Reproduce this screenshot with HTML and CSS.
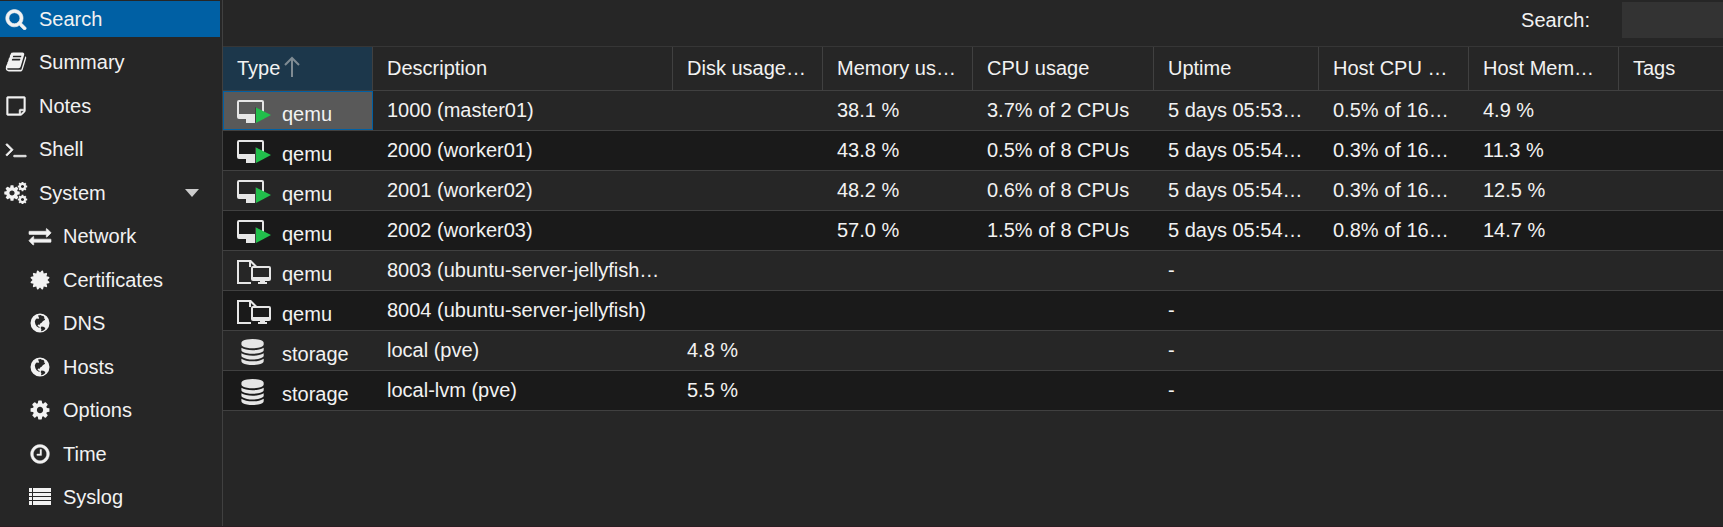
FILE: index.html
```html
<!DOCTYPE html>
<html lang="en">
<head>
    <meta charset="UTF-8">
    <meta name="viewport" content="width=device-width, initial-scale=1.0">
    <title>pve - Search</title>
    <link rel="stylesheet" href="styles.css">
</head>
<body>
    <!-- Shared icons -->
    <svg class="sprite" aria-hidden="true">
        <symbol id="i-search" viewBox="0 0 1792 1792"><path stroke="currentColor" stroke-width="50" d="M1216 832q0-185-131.5-316.5t-316.5-131.5-316.5 131.5-131.5 316.5 131.5 316.5 316.5 131.5 316.5-131.5 131.5-316.5zm512 832q0 52-38 90t-90 38q-54 0-90-38l-343-342q-179 124-399 124-143 0-273.5-55.5t-225-150-150-225-55.5-273.5 55.5-273.5 150-225 225-150 273.5-55.5 273.5 55.5 225 150 150 225 55.5 273.5q0 220-124 399l343 343q37 37 37 90z"/></symbol>
        <symbol id="i-book" viewBox="0 0 1792 1792"><path d="M1703 478q40 57 18 129l-275 906q-19 64-76.5 107.5t-122.5 43.5h-923q-77 0-148.5-53.5t-99.5-131.5q-24-67-2-127 0-4 3-27t4-37q1-8-3-21.5t-3-19.5q2-11 8-21t16.5-23.5 16.5-23.5q23-38 45-91.5t30-91.5q3-10 .5-30t-.5-28q3-11 17-28t17-23q21-36 42-92t25-90q1-9-2.5-32t.5-28q4-13 22-30.5t22-22.5q19-26 42.5-84.5t27.5-96.5q1-8-3-25.5t-2-26.5q2-8 9-18t18-23 17-21q8-12 16.5-30.5t15-35 16-36 19.5-32 26.5-23.5 36-11.5 47.5 5.5l-1 3q38-9 51-9h761q74 0 114 56t18 130l-274 906q-36 119-71.5 153.5t-128.5 34.5h-869q-27 0-38 15-11 16-1 43 24 70 144 70h923q29 0 56-15.5t35-41.5l300-987q7-22 5-57 38 15 59 43zm-1064 2q-4 13 2 22.5t20 9.5h608q13 0 25.5-9.5t16.5-22.5l21-64q4-13-2-22.5t-20-9.5h-608q-13 0-25.5 9.5t-16.5 22.5zm-83 256q-4 13 2 22.5t20 9.5h608q13 0 25.5-9.5t16.5-22.5l21-64q4-13-2-22.5t-20-9.5h-608q-13 0-25.5 9.5t-16.5 22.5z"/></symbol>
        <symbol id="i-note" viewBox="-128 0 1792 1792"><path stroke="currentColor" stroke-width="40" d="M1400 1280h-248v248q29-10 41-22l185-185q12-12 22-41zm-280-128h288v-896h-1280v1280h896v-288q0-40 28-68t68-28zm416-928v1024q0 40-20 88t-48 76l-184 184q-28 28-76 48t-88 20h-1024q-40 0-68-28t-28-68v-1344q0-40 28-68t68-28h1344q40 0 68 28t28 68z"/></symbol>
        <symbol id="i-terminal" viewBox="0 0 1792 1792"><path stroke="currentColor" stroke-width="60" d="M649 983l-466 466q-10 10-23 10t-23-10l-50-50q-10-10-10-23t10-23l393-393-393-393q-10-10-10-23t10-23l50-50q10-10 23-10t23 10l466 466q10 10 10 23t-10 23zm1079 457v64q0 14-9 23t-23 9h-960q-14 0-23-9t-9-23v-64q0-14 9-23t23-9h960q14 0 23 9t9 23z"/></symbol>
        <symbol id="i-cog" viewBox="0 0 1792 1792"><path d="M1152 896q0-106-75-181t-181-75-181 75-75 181 75 181 181 75 181-75 75-181zm512-109v222q0 12-8 23t-20 13l-185 28q-19 54-39 91 35 50 107 138 10 12 10 25t-9 23q-27 37-99 108t-94 71q-12 0-26-9l-138-108q-44 23-91 38-16 136-29 186-7 28-36 28h-222q-14 0-24.5-8.5t-11.5-21.5l-28-184q-49-16-90-37l-141 107q-10 9-25 9-14 0-25-11-126-114-165-168-7-10-7-23 0-12 8-23 15-21 51-66.5t54-70.5q-27-50-41-99l-183-27q-13-2-21-12.5t-8-23.5v-222q0-12 8-23t19-13l186-28q14-46 39-92-40-57-107-138-10-12-10-24 0-10 9-23 26-36 98.5-107.5t94.5-71.5q13 0 26 10l138 107q44-23 91-38 16-136 29-186 7-28 36-28h222q14 0 24.5 8.5t11.5 21.5l28 184q49 16 90 37l142-107q9-9 24-9 13 0 25 10 129 119 165 170 7 8 7 22 0 12-8 23-15 21-51 66.5t-54 70.5q26 50 41 98l183 28q13 2 21 12.5t8 23.5z"/></symbol>
        <symbol id="i-cogs" viewBox="0 0 24 22">
            <use href="#i-cog" x="-1" y="2" width="18" height="18"/>
            <use href="#i-cog" x="13" y="-1" width="11" height="11"/>
            <use href="#i-cog" x="13" y="12" width="11" height="11"/>
        </symbol>
        <symbol id="i-exchange" viewBox="0 0 1792 1792"><path stroke="currentColor" stroke-width="50" d="M1792 1184v192q0 13-9.5 22.5t-22.5 9.5h-1376v192q0 13-9.5 22.5t-22.5 9.5q-12 0-24-10l-319-320q-9-9-9-22 0-14 9-23l320-320q9-9 23-9 13 0 22.5 9.5t9.5 22.5v192h1376q13 0 22.5 9.5t9.5 22.5zm0-544q0 14-9 23l-320 320q-9 9-23 9-13 0-22.5-9.5t-9.5-22.5v-192h-1376q-13 0-22.5-9.5t-9.5-22.5v-192q0-13 9.5-22.5t22.5-9.5h1376v-192q0-14 9-23t23-9q12 0 24 10l319 319q9 9 9 23z"/></symbol>
        <symbol id="i-cert" viewBox="0 0 1792 1792"><path d="M1504 896l138 135q30 28 20 70-12 41-52 51l-188 48 53 186q12 41-19 70-29 31-70 19l-186-53-48 188q-10 40-51 52-12 2-19 2-31 0-51-22l-135-138-135 138q-28 30-70 20-41-11-51-52l-48-188-186 53q-41 12-70-19-31-29-19-70l53-186-188-48q-40-10-52-51-10-42 20-70l138-135-138-135q-30-28-20-70 12-41 52-51l188-48-53-186q-12-41 19-70 29-31 70-19l186 53 48-188q10-41 51-51 41-12 70 19l135 139 135-139q29-30 70-19 41 10 51 51l48 188 186-53q41-12 70 19 31 29 19 70l-53 186 188 48q40 10 52 51 10 42-20 70z"/></symbol>
        <symbol id="i-globe" viewBox="0 0 22 22">
            <path fill-rule="evenodd" d="M11 1.500a9.500 9.500 0 1 0 0 19a9.500 9.500 0 0 0 0-19z M9 3.600l2.600-.6 1.200.8 1.600.2 1 1.200-.6 1.200 1.400.4-.4 1.200-1.800 1-1.400 1.800-1.400.8-.4 1.200-1.200-.2-1 .6.400 1 1.200.6.6 1.200-1.400-.4-1.800-1.400-1.200-2-.6-2.600.8-2 1.400-1.400 1 .8 1.200-.8z M12.400 14.400l2 .4 2 1.200-.6 1.400-1.800 1.400-2 .4.400-2-.8-1.200z"/>
        </symbol>
        <symbol id="i-clock" viewBox="0 0 1792 1792"><path stroke="currentColor" stroke-width="30" d="M1024 544v448q0 14-9 23t-23 9h-320q-14 0-23-9t-9-23v-64q0-14 9-23t23-9h224v-352q0-14 9-23t23-9h64q14 0 23 9t9 23zm416 352q0-148-73-273t-198-198-273-73-273 73-198 198-73 273 73 273 198 198 273 73 273-73 198-198 73-273zm224 0q0 209-103 385.5t-279.5 279.5-385.5 103-385.5-103-279.5-279.5-103-385.5 103-385.5 279.5-279.5 385.5-103 385.5 103 279.5 279.5 103 385.5z"/></symbol>
        <symbol id="i-list" viewBox="0 0 22 22"><path d="M0 2h3v4H0zM4 2h18v4H4zM0 7h3v3H0zM4 7h18v3H4zM0 11h3v3H0zM4 11h18v3H4zM0 15h3v4H0zM4 15h18v4H4z"/></symbol>
        <symbol id="i-vm" viewBox="0 0 34 26">
            <path fill-rule="evenodd" d="M2 1h23a2 2 0 0 1 2 2v15a2 2 0 0 1-2 2h-7v4H9v-4H2a2 2 0 0 1-2-2V3a2 2 0 0 1 2-2zM2 3v12h23V3z"/>
            <path class="shadow" d="M18 8v16l3-2V10z"/>
            <path class="play" d="M19 8.500l15 7.500-15 8z"/>
        </symbol>
        <symbol id="i-template" viewBox="0 0 34 26">
            <path d="M0 1h14l6 6h-3l-3-3v4h-2V3H2v20h12v2H0z"/>
            <path fill-rule="evenodd" d="M16 7h16a2 2 0 0 1 2 2v11a2 2 0 0 1-2 2h-4v1h2v2h-9v-2h2v-1h-7a2 2 0 0 1-2-2V9a2 2 0 0 1 2-2zM16 9v9h16V9z"/>
        </symbol>
        <symbol id="i-storage" viewBox="100 0 1792 1792"><path d="M896 768q237 0 443-43t325-127v170q0 69-103 128t-280 93.500-385 34.500-385-34.500-280-93.500-103-128v-170q119 84 325 127t443 43zm0 768q237 0 443-43t325-127v170q0 69-103 128t-280 93.500-385 34.500-385-34.500-280-93.500-103-128v-170q119 84 325 127t443 43zm0-384q237 0 443-43t325-127v170q0 69-103 128t-280 93.500-385 34.500-385-34.500-280-93.500-103-128v-170q119 84 325 127t443 43zm0-1152q208 0 385 34.500t280 93.500 103 128v128q0 69-103 128t-280 93.500-385 34.500-385-34.500-280-93.500-103-128v-128q0-69 103-128t280-93.500 385-34.500z"/></symbol>
    </svg>

    <div class="layout">
        <nav class="sidebar">
            <ul class="nav">
                <li><a href="#search" class="nav-link active"><svg class="icon"><use href="#i-search"/></svg>Search</a></li>
                <li><a href="#summary" class="nav-link"><svg class="icon"><use href="#i-book"/></svg>Summary</a></li>
                <li><a href="#notes" class="nav-link"><svg class="icon"><use href="#i-note"/></svg>Notes</a></li>
                <li><a href="#shell" class="nav-link"><svg class="icon"><use href="#i-terminal"/></svg>Shell</a></li>
                <li><a href="#system" class="nav-link"><svg class="icon"><use href="#i-cogs"/></svg>System<span class="caret"></span></a></li>
                <li><a href="#network" class="nav-link sub"><svg class="icon"><use href="#i-exchange"/></svg>Network</a></li>
                <li><a href="#certificates" class="nav-link sub"><svg class="icon"><use href="#i-cert"/></svg>Certificates</a></li>
                <li><a href="#dns" class="nav-link sub"><svg class="icon"><use href="#i-globe"/></svg>DNS</a></li>
                <li><a href="#hosts" class="nav-link sub"><svg class="icon"><use href="#i-globe"/></svg>Hosts</a></li>
                <li><a href="#options" class="nav-link sub"><svg class="icon"><use href="#i-cog"/></svg>Options</a></li>
                <li><a href="#time" class="nav-link sub"><svg class="icon"><use href="#i-clock"/></svg>Time</a></li>
                <li><a href="#syslog" class="nav-link sub"><svg class="icon"><use href="#i-list"/></svg>Syslog</a></li>
            </ul>
        </nav>

        <main class="content">
            <div class="toolbar">
                <label for="search">Search:</label>
                <input type="text" id="search" class="search-input">
            </div>

            <table class="grid">
                <colgroup>
                    <col class="col-type">
                    <col class="col-desc">
                    <col class="col-usage">
                    <col class="col-usage">
                    <col class="col-cpu">
                    <col class="col-uptime">
                    <col class="col-usage">
                    <col class="col-usage">
                    <col>
                </colgroup>
                <thead>
                    <tr>
                        <th class="sorted">Type<svg class="sort" viewBox="0 0 16 22"><path d="M8 21V2M1 9l7-7 7 7"/></svg></th>
                        <th>Description</th>
                        <th>Disk usage…</th>
                        <th>Memory us…</th>
                        <th>CPU usage</th>
                        <th>Uptime</th>
                        <th>Host CPU …</th>
                        <th>Host Mem…</th>
                        <th>Tags</th>
                    </tr>
                </thead>
                <tbody>
                    <tr>
                        <td class="selected"><div class="type"><svg class="type-icon"><use href="#i-vm"/></svg>qemu</div></td>
                        <td>1000 (master01)</td>
                        <td></td>
                        <td>38.1 %</td>
                        <td>3.7% of 2 CPUs</td>
                        <td>5 days 05:53…</td>
                        <td>0.5% of 16…</td>
                        <td>4.9 %</td>
                        <td></td>
                    </tr>
                    <tr>
                        <td><div class="type"><svg class="type-icon"><use href="#i-vm"/></svg>qemu</div></td>
                        <td>2000 (worker01)</td>
                        <td></td>
                        <td>43.8 %</td>
                        <td>0.5% of 8 CPUs</td>
                        <td>5 days 05:54…</td>
                        <td>0.3% of 16…</td>
                        <td>11.3 %</td>
                        <td></td>
                    </tr>
                    <tr>
                        <td><div class="type"><svg class="type-icon"><use href="#i-vm"/></svg>qemu</div></td>
                        <td>2001 (worker02)</td>
                        <td></td>
                        <td>48.2 %</td>
                        <td>0.6% of 8 CPUs</td>
                        <td>5 days 05:54…</td>
                        <td>0.3% of 16…</td>
                        <td>12.5 %</td>
                        <td></td>
                    </tr>
                    <tr>
                        <td><div class="type"><svg class="type-icon"><use href="#i-vm"/></svg>qemu</div></td>
                        <td>2002 (worker03)</td>
                        <td></td>
                        <td>57.0 %</td>
                        <td>1.5% of 8 CPUs</td>
                        <td>5 days 05:54…</td>
                        <td>0.8% of 16…</td>
                        <td>14.7 %</td>
                        <td></td>
                    </tr>
                    <tr>
                        <td><div class="type"><svg class="type-icon"><use href="#i-template"/></svg>qemu</div></td>
                        <td>8003 (ubuntu-server-jellyfish…</td>
                        <td></td>
                        <td></td>
                        <td></td>
                        <td>-</td>
                        <td></td>
                        <td></td>
                        <td></td>
                    </tr>
                    <tr>
                        <td><div class="type"><svg class="type-icon"><use href="#i-template"/></svg>qemu</div></td>
                        <td>8004 (ubuntu-server-jellyfish)</td>
                        <td></td>
                        <td></td>
                        <td></td>
                        <td>-</td>
                        <td></td>
                        <td></td>
                        <td></td>
                    </tr>
                    <tr>
                        <td><div class="type"><svg class="type-icon"><use href="#i-storage"/></svg>storage</div></td>
                        <td>local (pve)</td>
                        <td>4.8 %</td>
                        <td></td>
                        <td></td>
                        <td>-</td>
                        <td></td>
                        <td></td>
                        <td></td>
                    </tr>
                    <tr>
                        <td><div class="type"><svg class="type-icon"><use href="#i-storage"/></svg>storage</div></td>
                        <td>local-lvm (pve)</td>
                        <td>5.5 %</td>
                        <td></td>
                        <td></td>
                        <td>-</td>
                        <td></td>
                        <td></td>
                        <td></td>
                    </tr>
                </tbody>
            </table>
        </main>
    </div>
</body>
</html>
```
FILE: styles.css
```css
:root {
    --bg: #262626;
    --bg-alt: #1a1a1a;
    --bg-input: #333333;
    --bg-sorted: #1c374b;
    --bg-selected: #595959;
    --border: #404040;
    --border-light: #363636;
    --border-bottom: #2a1d22;
    --primary: #0060a4;
    --text: #f2f2f2;
    --icon: #e6e6e6;
    --green: #21bf4b;
}

* {
    box-sizing: border-box;
}

body {
    margin: 0;
    background-color: var(--bg);
    color: var(--text);
    font-family: "Liberation Sans", Arial, sans-serif;
    font-size: 20px;
    line-height: 24px;
}

.sprite {
    display: none;
}

.layout {
    display: flex;
    min-height: 100vh;
    border-bottom: 1px solid var(--border-bottom);
}

/* Sidebar */
.sidebar {
    flex: none;
    width: 223px;
    padding: 1px 2px 0 0;
    border-right: 1px solid var(--border);
}

.nav {
    list-style: none;
    margin: 0;
    padding: 0;
}

.nav li {
    margin-bottom: 7px;
}

.nav li:nth-child(even) {
    margin-bottom: 8px;
}

.nav li:last-child {
    margin-bottom: 0;
}

.nav-link {
    display: flex;
    align-items: center;
    gap: 11px;
    height: 36px;
    padding: 0 21px 0 4px;
    color: var(--text);
    text-decoration: none;
}

.nav-link.sub {
    padding-left: 28px;
}

.nav-link.active {
    background-color: var(--primary);
}

.icon {
    flex: none;
    width: 24px;
    height: 22px;
    fill: currentColor;
}

.caret {
    margin-left: auto;
    border: 7px solid transparent;
    border-top: 8px solid #cccccc;
    border-bottom: 0;
}

/* Toolbar */
.content {
    flex: 1;
    min-width: 0;
}

.toolbar {
    display: flex;
    justify-content: flex-end;
    align-items: center;
    gap: 32px;
    height: 47px;
    padding-bottom: 7px;
    border-bottom: 1px solid var(--border-light);
}

.search-input {
    width: 101px;
    height: 36px;
    padding: 0 8px;
    border: none;
    background-color: var(--bg-input);
    color: var(--text);
    font: inherit;
}

/* Resource grid */
.grid {
    width: 100%;
    table-layout: fixed;
    border-collapse: separate;
    border-spacing: 0;
}

.col-type {
    width: 150px;
}

.col-desc {
    width: 300px;
}

.col-usage {
    width: 150px;
}

.col-cpu {
    width: 181px;
}

.col-uptime {
    width: 165px;
}

.grid th,
.grid td {
    padding: 0 14px 2px;
    border-bottom: 1px solid var(--border);
    text-align: left;
    white-space: nowrap;
}

.grid th {
    height: 44px;
    border-right: 1px solid var(--border);
    font-weight: normal;
}

.grid th:last-child {
    border-right: none;
}

.grid td {
    height: 40px;
}

.grid td:first-child {
    padding-bottom: 0;
}

.grid tbody tr:nth-child(even) {
    background-color: var(--bg-alt);
}

.grid .sorted {
    background-color: var(--bg-sorted);
}

.grid .selected {
    background-color: var(--bg-selected);
    box-shadow: inset 0 0 0 1px var(--primary);
}

.sort {
    width: 16px;
    height: 22px;
    margin-left: 4px;
    vertical-align: top;
    fill: none;
    stroke: #7f8b93;
    stroke-width: 2;
}

.type {
    display: flex;
    align-items: center;
    gap: 11px;
    padding-top: 6px;
}

.type-icon {
    flex: none;
    width: 34px;
    height: 26px;
    margin-bottom: 4px;
    fill: var(--icon);
}

.play {
    fill: var(--green);
}

.shadow {
    fill: #404040;
}
```
